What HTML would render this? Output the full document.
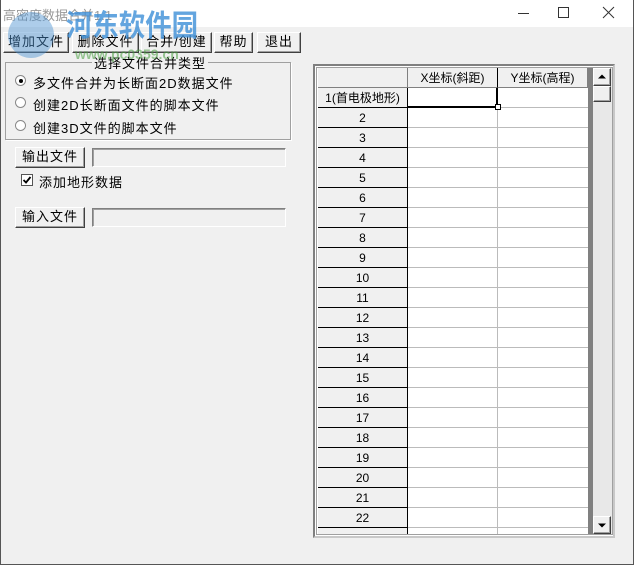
<!DOCTYPE html>
<html><head><meta charset="utf-8"><style>
*{box-sizing:border-box;margin:0;padding:0}
body{width:634px;height:565px;overflow:hidden;background:#f0f0f0;font-family:"Liberation Sans","Noto Sans CJK SC","WenQuanYi Zen Hei",sans-serif;font-size:12px;color:#000;position:relative}
.a{position:absolute}
.win{left:0;top:0;width:634px;height:565px;border:1px solid #555;border-top:none}
.title{left:1px;top:0;width:632px;height:27px;background:#fff}
.btn{position:absolute;height:21px;background:#f0f0f0;border:1px solid;border-color:#fff #404040 #404040 #fff;box-shadow:inset -1px -1px 0 #a0a0a0;text-align:center;line-height:18px;font-size:13px;letter-spacing:1px}
.tb{position:absolute;height:19px;border:1px solid;border-color:#808080 #fff #fff #808080;box-shadow:inset 1px 1px 0 #a0a0a0;background:#f0f0f0}
.rad{position:absolute;width:11px;height:11px;border-radius:50%;border:1px solid #888;background:#fff}
.lbl{position:absolute;font-size:13px;letter-spacing:1px;white-space:nowrap}
.grid{left:318px;top:68px;width:270px;height:466px;background:#fff;overflow:hidden}
.row{position:absolute;left:0;width:270px;height:20px}
.h{position:absolute;left:0;width:90px;height:20px;background:#f0f0f0;border-right:1px solid #000;border-bottom:1px solid #000;text-align:center;line-height:20px;font-size:12px}
.c1{position:absolute;left:90px;width:90px;height:20px;border-right:1px solid #bbb;border-bottom:1px solid #bbb}
.c2{position:absolute;left:180px;width:90px;height:20px;border-bottom:1px solid #bbb}
</style></head><body>
<div class="a win"></div>
<div class="a title"></div>
<div class="a" style="left:3px;top:5px;color:#999;font-size:13px">高密度数据合并1.1</div>
<div class="a" style="left:518px;top:13px;width:11px;height:1px;background:#333"></div>
<div class="a" style="left:558px;top:7px;width:11px;height:11px;border:1px solid #333"></div>
<svg class="a" style="left:602px;top:6px" width="13" height="13"><path d="M1 1L12 12M12 1L1 12" stroke="#333" stroke-width="1"/></svg>

<div class="btn" style="left:3px;top:32px;width:66px">增加文件</div>
<div class="btn" style="left:72px;top:32px;width:67px">删除文件</div>
<div class="btn" style="left:141px;top:32px;width:71px">合并/创建</div>
<div class="btn" style="left:214px;top:32px;width:39px">帮助</div>
<div class="btn" style="left:257px;top:32px;width:44px">退出</div>

<div class="a" style="left:5px;top:62px;width:286px;height:78px;border:1px solid #a0a0a0;box-shadow:1px 1px 0 #fff"></div>
<div class="lbl" style="left:92px;top:53px;background:#f0f0f0;padding:0 2px">选择文件合并类型</div>
<div class="rad" style="left:15px;top:75px"></div><div class="a" style="left:19px;top:79px;width:4px;height:4px;border-radius:50%;background:#000"></div>
<div class="lbl" style="left:33px;top:73px">多文件合并为长断面2D数据文件</div>
<div class="rad" style="left:15px;top:97px"></div>
<div class="lbl" style="left:33px;top:95px">创建2D长断面文件的脚本文件</div>
<div class="rad" style="left:15px;top:120px"></div>
<div class="lbl" style="left:33px;top:118px">创建3D文件的脚本文件</div>

<div class="btn" style="left:15px;top:147px;width:70px">输出文件</div>
<div class="tb" style="left:92px;top:148px;width:194px"></div>
<div class="a" style="left:21px;top:174px;width:12px;height:12px;border:1px solid #555;background:#fff"></div>
<svg class="a" style="left:22px;top:175px" width="10" height="10"><path d="M1.5 5L4 7.5L8.5 2" stroke="#000" stroke-width="1.8" fill="none"/></svg>
<div class="lbl" style="left:39px;top:172px">添加地形数据</div>
<div class="btn" style="left:15px;top:207px;width:70px">输入文件</div>
<div class="tb" style="left:92px;top:208px;width:194px"></div>

<div class="a" style="left:313px;top:64px;width:302px;height:474px;border:2px solid #808080;border-right-color:#c8c8c8;border-bottom-color:#c8c8c8;background:#fff"></div>
<div class="a" style="left:316px;top:67px;width:297px;height:468px;border:1px solid #a0a0a0"></div>
<div class="a grid">
<div class="row" style="top:0"><div class="h" style="border-color:#808080;border-right:1px solid #808080"></div><div class="c1" style="background:#f0f0f0;border-right-color:#000;border-bottom-color:#808080;text-align:center;line-height:20px">X坐标(斜距)</div><div class="c2" style="background:#f0f0f0;border-bottom-color:#808080;border-right:1px solid #808080;text-align:center;line-height:20px">Y坐标(高程)</div></div>
<div class="row" style="top:20px"><div class="h">1(首电极地形)</div><div class="c1" style="border:2px solid #000;border-left:none;border-top:none"></div><div class="c2"></div></div>
<div class="row" style="top:40px"><div class="h">2</div><div class="c1"></div><div class="c2"></div></div>
<div class="row" style="top:60px"><div class="h">3</div><div class="c1"></div><div class="c2"></div></div>
<div class="row" style="top:80px"><div class="h">4</div><div class="c1"></div><div class="c2"></div></div>
<div class="row" style="top:100px"><div class="h">5</div><div class="c1"></div><div class="c2"></div></div>
<div class="row" style="top:120px"><div class="h">6</div><div class="c1"></div><div class="c2"></div></div>
<div class="row" style="top:140px"><div class="h">7</div><div class="c1"></div><div class="c2"></div></div>
<div class="row" style="top:160px"><div class="h">8</div><div class="c1"></div><div class="c2"></div></div>
<div class="row" style="top:180px"><div class="h">9</div><div class="c1"></div><div class="c2"></div></div>
<div class="row" style="top:200px"><div class="h">10</div><div class="c1"></div><div class="c2"></div></div>
<div class="row" style="top:220px"><div class="h">11</div><div class="c1"></div><div class="c2"></div></div>
<div class="row" style="top:240px"><div class="h">12</div><div class="c1"></div><div class="c2"></div></div>
<div class="row" style="top:260px"><div class="h">13</div><div class="c1"></div><div class="c2"></div></div>
<div class="row" style="top:280px"><div class="h">14</div><div class="c1"></div><div class="c2"></div></div>
<div class="row" style="top:300px"><div class="h">15</div><div class="c1"></div><div class="c2"></div></div>
<div class="row" style="top:320px"><div class="h">16</div><div class="c1"></div><div class="c2"></div></div>
<div class="row" style="top:340px"><div class="h">17</div><div class="c1"></div><div class="c2"></div></div>
<div class="row" style="top:360px"><div class="h">18</div><div class="c1"></div><div class="c2"></div></div>
<div class="row" style="top:380px"><div class="h">19</div><div class="c1"></div><div class="c2"></div></div>
<div class="row" style="top:400px"><div class="h">20</div><div class="c1"></div><div class="c2"></div></div>
<div class="row" style="top:420px"><div class="h">21</div><div class="c1"></div><div class="c2"></div></div>
<div class="row" style="top:440px"><div class="h">22</div><div class="c1"></div><div class="c2"></div></div>
<div class="row" style="top:460px"><div class="h"></div><div class="c1"></div><div class="c2"></div></div>
</div>
<div class="a" style="left:495px;top:104px;width:6px;height:6px;border:1px solid #000;background:#fff"></div>
<div class="a" style="left:588px;top:68px;width:5px;height:466px;background:#808080"></div>
<div class="a" style="left:593px;top:68px;width:19px;height:466px;background:#e8e8e8"></div>
<div class="btn" style="left:593px;top:68px;width:18px;height:18px"></div>
<svg class="a" style="left:598px;top:74px" width="8" height="5"><path d="M0 4.5L4 0.5L8 4.5Z" fill="#000"/></svg>
<div class="btn" style="left:593px;top:86px;width:18px;height:16px"></div>
<div class="btn" style="left:593px;top:516px;width:18px;height:18px"></div>
<svg class="a" style="left:598px;top:523px" width="8" height="5"><path d="M0 0.5L4 4.5L8 0.5Z" fill="#000"/></svg>

<div class="a" style="left:8px;top:12px;width:46px;height:46px;border-radius:50%;background:#4a90d0;opacity:.45"></div>
<div class="a" style="left:66px;top:11px;font-size:30px;line-height:32px;font-weight:bold;color:#3d8fd8;opacity:.8;transform-origin:0 0;transform:scaleX(0.88)">河东软件园</div>
<div class="a" style="left:75px;top:46px;font-size:14px;line-height:16px;font-weight:bold;color:#4aa040;opacity:.55">www.pc0359.cn</div>
</body></html>
